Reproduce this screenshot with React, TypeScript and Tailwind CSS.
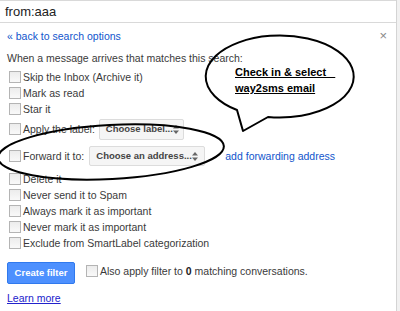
import React from "react";

function Box({ className = "" }: { className?: string }) {
  return (
    <span
      className={`inline-block w-[12px] h-[12px] border border-[#b4b4b4] bg-gradient-to-b from-[#ececec] to-[#f9f9f9] shrink-0 ${className}`}
    />
  );
}

function Row({ children, h = "h-[16px]" }: { children: React.ReactNode; h?: string }) {
  return (
    <div className={`flex items-center whitespace-nowrap ${h}`}>
      <Box className="ml-[2px] mr-[2px]" />
      {children}
    </div>
  );
}

function Arrows() {
  return (
    <svg width="6" height="9" viewBox="0 0 6 9" className="shrink-0">
      <path d="M3 0 L6 3.5 L0 3.5 Z" fill="#666" />
      <path d="M3 9 L6 5.5 L0 5.5 Z" fill="#666" />
    </svg>
  );
}

export default function App() {
  return (
    <div
      className="relative w-[400px] h-[311px] overflow-hidden bg-white flex text-[#3a3a3a]"
      style={{ fontFamily: '"Liberation Sans", Arial, sans-serif' }}
    >
      <div className="w-[397px] border-r border-[#d4d4d4] flex flex-col shrink-0">
        <div className="h-[23px] border-t border-b border-[#d9d9d9] flex items-center pl-[5px] text-[13px] text-[#222]">
          from:aaa
        </div>
        <div className="flex flex-col px-[7px] pt-[6px] text-[10.5px] leading-[14px]">
          <div className="flex justify-between h-[14px]">
            <span className="text-[#1155cc]">« back to search options</span>
            <span className="text-[#888] text-[13px] leading-[14px] mr-[2px]">×</span>
          </div>
          <div className="mt-[8px] h-[14px]">When a message arrives that matches this search:</div>
          <div className="mt-[4px] flex flex-col">
            <Row>Skip the Inbox (Archive it)</Row>
            <Row>Mark as read</Row>
            <Row>Star it</Row>
            <Row h="h-[24px]">
              <span>Apply the label:</span>
              <span className="ml-[4px] w-[85px] h-[21px] flex items-center justify-between pl-[6px] pr-[5px] bg-[#f5f5f5] border border-[#dcdcdc] rounded-[2px] text-[9.5px] font-bold text-[#444] whitespace-nowrap">
                Choose label...
                <Arrows />
              </span>
            </Row>
            <Row h="h-[30px]">
              <span>Forward it to:</span>
              <span className="ml-[5px] w-[116px] h-[20px] flex items-center justify-between pl-[6px] pr-[6px] bg-[#f5f5f5] border border-[#dcdcdc] rounded-[2px] text-[9.5px] font-bold text-[#444] whitespace-nowrap">
                Choose an address...
                <Arrows />
              </span>
              <span className="ml-[20px] text-[#1155cc]">add forwarding address</span>
            </Row>
            <Row>Delete it</Row>
            <Row>Never send it to Spam</Row>
            <Row>Always mark it as important</Row>
            <Row>Never mark it as important</Row>
            <Row>Exclude from SmartLabel categorization</Row>
          </div>
          <div className="mt-[11px] flex items-center h-[22px] whitespace-nowrap">
            <button className="w-[68px] h-[22px] bg-[#4d90fe] border border-[#3079ed] rounded-[2px] text-white font-bold text-[9.5px]">
              Create filter
            </button>
            <Box className="ml-[11px] mr-[2px] -mt-[4px]" />
            <span className="-mt-[4px]">
              Also apply filter to <b className="text-[#222]">0</b> matching conversations.
            </span>
          </div>
          <div className="mt-[7px] h-[14px]">
            <span className="text-[#2222cc] underline">Learn more</span>
          </div>
        </div>
      </div>
      <div className="flex-1 bg-[#f1f1f1]" />

      <svg className="absolute inset-0 pointer-events-none" width="400" height="311">
        <path
          d="M 268 117 A 74 41 0 1 0 237 110 L 243 131 Z"
          fill="none"
          stroke="#000"
          strokeWidth="2"
          strokeLinejoin="round"
        />
        <ellipse
          cx="111"
          cy="152"
          rx="113"
          ry="27"
          transform="rotate(-3 111 152)"
          fill="none"
          stroke="#000"
          strokeWidth="2"
        />
      </svg>
      <div
        className="absolute left-[235px] top-[64px] text-[11px] font-bold leading-[16px] text-black"
        style={{ fontFamily: '"Liberation Sans", Arial, sans-serif' }}
      >
        <div className="underline whitespace-pre">Check in &amp; select   </div>
        <div className="underline">way2sms email</div>
      </div>
    </div>
  );
}
